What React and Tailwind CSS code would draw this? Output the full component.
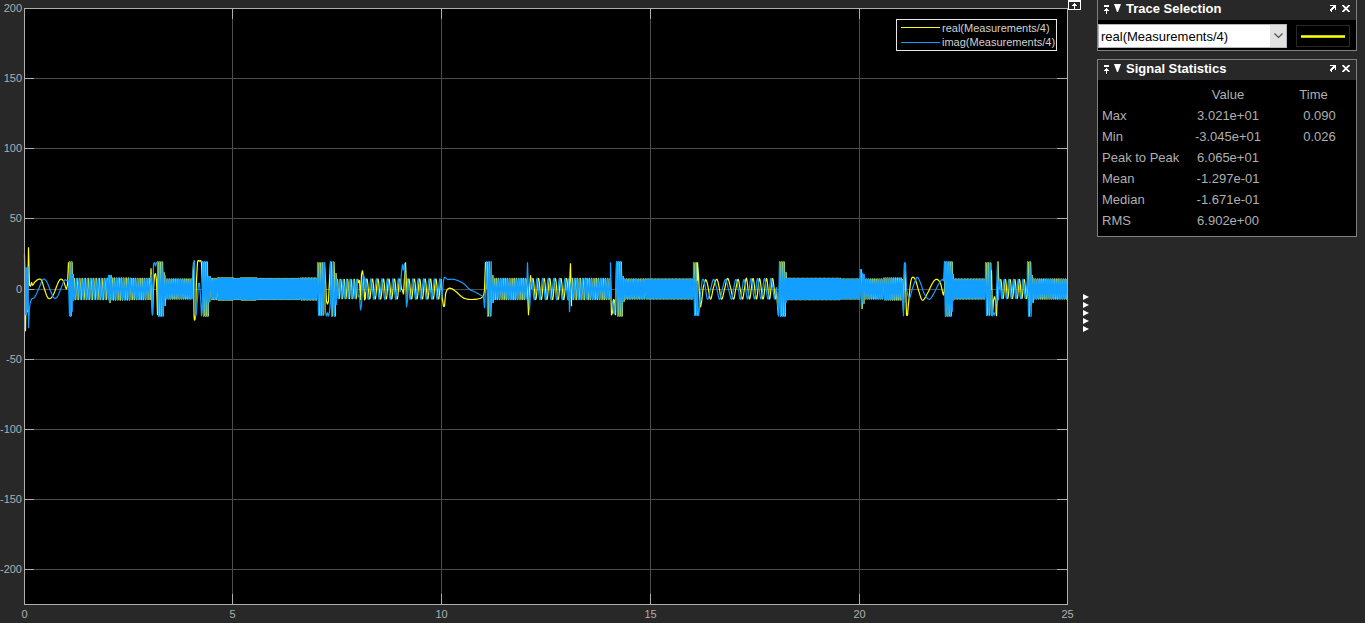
import { useState } from "react";

const BASE = 288.7;

// Each entry is either a steady oscillation {from, to, amp, period}
// or a pair of hand-placed key points {real, imag} for the slow transitions.
const SEGMENTS = [
  {
    real: [[24, 254], [25, 331], [26, 270], [27, 312], [28, 247], [29, 285], [30, 286], [31, 282], [32, 285], [34, 282], [38, 279], [41, 280], [44, 289], [47, 297], [50, 298], [53, 294], [57, 284], [60, 279], [63, 281], [66, 289]],
    imag: [[24, 256], [25, 315], [25.5, 267], [26, 315], [26.5, 267], [27, 310], [27.5, 266], [28, 328], [29, 307], [31, 299], [34, 297], [38, 289], [42, 280], [44, 279], [47, 283], [51, 293], [54, 298], [57, 296], [60, 289], [64, 280], [66, 280]],
  },
  { real: [[67, 284], [68, 262], [69, 266]], imag: [[67, 281], [68, 280], [69, 316]] },
  { from: 69, to: 72, amp: 28, period: 2 },
  { from: 72, to: 73, amp: 15, period: 2 },
  { from: 73, to: 108, amp: 10.8, period: 2.78 },
  { from: 108, to: 111, amp: 14, period: 2 },
  { from: 111, to: 130, amp: 11.2, period: 2.35 },
  { from: 130, to: 150, amp: 10.8, period: 2.25 },
  {
    real: [[150.5, 268], [152, 315], [153, 290], [154, 275], [155, 273], [156, 280], [157, 315]],
    imag: [[151, 274], [152, 315], [153, 264], [154, 262], [155, 266], [156, 262], [157, 264]],
  },
  { from: 157, to: 163, amp: 28, period: 2.2 },
  { from: 163, to: 165, amp: 17, period: 2.1 },
  { from: 165, to: 192, amp: 10.2, period: 1.85 },
  {
    real: [[193, 262], [193.5, 315], [195, 314], [196, 280], [197, 262], [199, 261], [201, 263], [202, 290], [203, 315]],
    imag: [[192.5, 270], [194, 262], [195, 315], [197, 298], [198, 283], [199, 283], [200, 296], [201, 316], [202, 300]],
  },
  { from: 202, to: 208, amp: 28, period: 2.1 },
  { from: 208, to: 210, amp: 13, period: 1.6 },
  { from: 210, to: 217, amp: 10.8, period: 1.6 },
  { from: 217, to: 233, amp: 11.3, period: 1.1 },
  { from: 233, to: 240, amp: 10.7, period: 1.1 },
  { from: 240, to: 256, amp: 11.3, period: 1.1 },
  { from: 256, to: 300, amp: 10.7, period: 1.15 },
  { from: 300, to: 317, amp: 11.2, period: 1.5 },
  { from: 317, to: 324, amp: 27, period: 2.2 },
  {
    real: [[324, 262], [325, 280], [326, 301], [327, 304], [328, 301], [329, 280], [330, 261]],
    imag: [[324, 262], [325, 312], [326, 316], [327, 312], [328, 316], [329, 312], [330, 300]],
  },
  { from: 330, to: 335, amp: 28, period: 2.7 },
  { from: 335, to: 336, amp: 16, period: 2 },
  { from: 336, to: 358, amp: 10.2, period: 3.4 },
  {
    real: [[359, 280], [360, 300], [361, 274], [362, 270], [363, 278], [364, 300], [365, 298]],
    imag: [[359, 295], [360, 310], [361, 305], [362, 285], [363, 274], [364, 278], [365, 292]],
  },
  { from: 365, to: 400, amp: 10.5, period: 5.5 },
  {
    real: [[401, 289], [402, 290], [403, 294], [404, 278], [405, 262], [406, 285], [407, 302]],
    imag: [[401, 272], [402, 264], [403, 270], [404, 263], [405, 285], [406, 307], [407, 300]],
  },
  { from: 407, to: 441, amp: 10.5, period: 5.4 },
  {
    real: [[441, 289], [442, 299], [443, 306], [444, 306], [445, 294], [447, 289], [450, 288], [455, 291], [462, 297], [468, 299], [475, 299], [480, 298], [483, 296]],
    imag: [[441, 300], [442, 290], [443, 280], [444, 277], [447, 279], [453, 279], [459, 281], [464, 284], [469, 289], [475, 292], [483, 296]],
  },
  { real: [[484, 290], [485, 262], [486, 263]], imag: [[484, 308], [485, 290], [486, 262]] },
  { from: 486, to: 491, amp: 28, period: 2.4 },
  { from: 491, to: 493, amp: 14, period: 2 },
  { from: 493, to: 526, amp: 10.7, period: 2.25 },
  {
    real: [[526, 279], [527, 290], [528, 315], [529, 290], [530, 275], [531, 282]],
    imag: [[526, 295], [527, 262], [528, 290], [529, 310], [530, 295], [531, 279]],
  },
  { from: 531, to: 568, amp: 11, period: 5.6 },
  {
    real: [[568, 300], [569, 285], [570, 263], [571, 306]],
    imag: [[568, 278], [569, 312], [570, 290], [571, 280]],
  },
  { from: 571, to: 586, amp: 10.8, period: 2.7 },
  { from: 586, to: 610, amp: 10.7, period: 2.3 },
  {
    real: [[610, 280], [611, 315], [612, 312], [613, 299], [614, 300], [615, 315], [616, 264]],
    imag: [[610, 262], [611, 300], [612, 302], [613, 312], [614, 314], [615, 300], [616, 262]],
  },
  { from: 616, to: 622, amp: 28, period: 2.1 },
  { from: 622, to: 624, amp: 13, period: 2 },
  { from: 624, to: 645, amp: 10.2, period: 1.7 },
  { from: 645, to: 693, amp: 10.2, period: 1.4 },
  { from: 693, to: 697, amp: 27, period: 2.2 },
  {
    real: [[697, 262], [698, 275], [699, 295], [700, 307], [701, 302], [703, 286]],
    imag: [[697, 290], [698, 316], [699, 308], [700, 293], [702, 279], [703, 279]],
  },
  {
    real: [[705, 279], [707, 284], [710, 299], [713, 287], [716, 279], [718, 284], [721, 299], [724, 289], [727, 278], [730, 287], [733, 299], [735, 290], [737.5, 279], [739.5, 288], [742, 299], [744, 288], [746, 278], [749, 299], [752.5, 278], [756, 299], [759, 278], [762.5, 299], [766, 278], [769, 299], [772, 278], [775, 299]],
    imag: [[704, 283], [707, 299], [710, 289], [713, 279], [716, 287], [719, 299], [722, 288], [725, 279], [728, 289], [731, 299], [733, 289], [735.5, 279], [738, 290], [740, 299], [743.5, 279], [747, 299], [750.5, 278], [754, 299], [757, 278], [760.5, 299], [764, 278], [767.5, 299], [770.5, 278], [774, 299]],
  },
  { real: [[776, 290], [777, 305], [778, 316]], imag: [[775, 290], [776, 287], [777, 302], [778, 316]] },
  { from: 779, to: 785, amp: 28, period: 2.1 },
  { from: 785, to: 786, amp: 17, period: 2 },
  { from: 786, to: 840, amp: 11, period: 1.3 },
  { from: 840, to: 860, amp: 10.2, period: 1.3 },
  { from: 860, to: 862, amp: 20, period: 2.2 },
  { from: 862, to: 864, amp: 15, period: 1.8 },
  { from: 864, to: 883, amp: 10.2, period: 1.86 },
  { from: 883, to: 902, amp: 11.2, period: 1.9 },
  {
    real: [[902, 279], [903, 310], [904, 264], [905, 280], [906, 315], [907, 315], [908, 303], [910, 283], [912, 277], [915, 280], [919, 293], [922, 300], [927, 293], [932, 283], [936, 279], [940, 283], [943, 295]],
    imag: [[902, 299], [903, 316], [904, 262], [905, 263], [906, 287], [908, 297], [909, 298], [912, 288], [915, 280], [917, 277], [920, 283], [924, 294], [929, 299], [934, 292], [938, 284], [942, 279], [943, 281]],
  },
  { from: 944, to: 952, amp: 28, period: 1.8 },
  { from: 952, to: 953, amp: 15, period: 2 },
  { from: 953, to: 985, amp: 10.2, period: 1.5 },
  { from: 985, to: 991, amp: 27, period: 2.3 },
  {
    real: [[991, 270], [992, 315], [993, 300], [994, 296], [995, 300], [996, 316], [997, 290], [997.5, 261], [998, 275]],
    imag: [[991, 290], [992, 316], [993, 312], [994, 315], [995, 312], [996, 290], [997, 262], [998, 300]],
  },
  { from: 999, to: 1027, amp: 10, period: 4.7 },
  { from: 1027, to: 1031, amp: 28, period: 2.4 },
  { from: 1031, to: 1033, amp: 14, period: 2 },
  { from: 1033, to: 1067, amp: 10.2, period: 1.86 },
];

function smooth(points) {
  const out = [];
  for (let i = 0; i < points.length - 1; i++) {
    const p0 = points[Math.max(0, i - 1)];
    const p1 = points[i];
    const p2 = points[i + 1];
    const p3 = points[Math.min(points.length - 1, i + 2)];
    const steps = p2[0] - p1[0] > 1.2 ? 6 : 1;
    for (let k = 0; k < steps; k++) {
      const t = k / steps;
      const y =
        0.5 *
        (2 * p1[1] +
          (p2[1] - p0[1]) * t +
          (2 * p0[1] - 5 * p1[1] + 4 * p2[1] - p3[1]) * t * t +
          (3 * p1[1] - p0[1] - 3 * p2[1] + p3[1]) * t * t * t);
      out.push([p1[0] + (p2[0] - p1[0]) * t, y]);
    }
  }
  out.push(points[points.length - 1]);
  return out;
}

function oscillate({ from, to, amp, period }, shift) {
  const out = [];
  const step = period / 10;
  const boost = shift === 0 && period < 3 ? 0.4 : 0;
  for (let x = from; x < to; x += step) {
    const phase = ((x - from) / period) * 2 * Math.PI + shift;
    out.push([x, BASE - (amp + boost) * Math.sin(phase)]);
  }
  return out;
}

function trace(key) {
  const shift = key === "imag" ? Math.PI / 2 : 0;
  const points = SEGMENTS.flatMap((s) => (s[key] ? smooth(s[key]) : oscillate(s, shift)));
  return "M" + points.map(([x, y]) => (x + 0.5).toFixed(2) + " " + (y + 0.3).toFixed(2)).join("L");
}

const REAL_PATH = trace("real");
const IMAG_PATH = trace("imag");

const Y_TICKS = [
  [200, 8], [150, 78], [100, 148], [50, 218], [0, 289], [-50, 359], [-100, 429], [-150, 499], [-200, 569],
];
const X_TICKS = [[0, 24], [5, 232], [10, 441], [15, 650], [20, 859], [25, 1067]];

function Scope() {
  return (
    <svg
      viewBox="0 0 1068 623"
      className="block h-auto w-full overflow-visible font-['Liberation_Sans',Arial,sans-serif] text-[11px]"
      role="img"
      aria-label="Measurements over time"
    >
      <rect x="24" y="8" width="1044" height="597" fill="#000" />
      <g shapeRendering="crispEdges" fill="none">
        {Y_TICKS.slice(1).map(([v, y]) => (
          <g key={v}>
            <path d={`M24 ${y + 0.5}H1067`} stroke="#4d4d4d" />
            <path d={`M24 ${y + 0.5}h10M1067 ${y + 0.5}h-10`} stroke="#afafaf" />
          </g>
        ))}
        {X_TICKS.slice(1, -1).map(([v, x]) => (
          <g key={v}>
            <path d={`M${x + 0.5} 9V604`} stroke="#4d4d4d" />
            <path d={`M${x + 0.5} 9v10M${x + 0.5} 604v-10`} stroke="#afafaf" />
          </g>
        ))}
      </g>
      <path d={REAL_PATH} fill="none" stroke="#ffff11" strokeWidth="1.2" strokeLinejoin="bevel" />
      <path d={IMAG_PATH} fill="none" stroke="#139fff" strokeWidth="1.2" strokeLinejoin="bevel" />
      <rect x="24.5" y="8.5" width="1043" height="596" fill="none" stroke="#afafaf" shapeRendering="crispEdges" />
      <g fill="#afafaf">
        {Y_TICKS.map(([v, y]) => (
          <text key={v} x="22" y={y + 4} textAnchor="end">
            {v}
          </text>
        ))}
        {X_TICKS.map(([v, x]) => (
          <text key={v} x={x + 0.5} y="618" textAnchor="middle">
            {v}
          </text>
        ))}
      </g>
      <g shapeRendering="crispEdges">
        <rect x="896.5" y="19.5" width="160" height="31" fill="#000" stroke="#e6e6e6" />
        <path d="M901 27.5h39" stroke="#ffff11" />
        <path d="M901 42.5h39" stroke="#139fff" />
      </g>
      <g fill="#d0d0d0">
        <text x="942" y="32">real(Measurements/4)</text>
        <text x="942" y="46">imag(Measurements/4)</text>
      </g>
    </svg>
  );
}

function Gutter() {
  return (
    <div className="flex w-[29px] shrink-0 flex-col items-start">
      <button type="button" aria-label="Maximize axes" className="h-[11px]">
        <svg width="13" height="11" viewBox="0 0 13 11" shapeRendering="crispEdges" className="block">
          <path d="M0 0h13v10H0z" fill="#fff" />
          <path d="M1 2h11v7H1z" fill="#282828" />
          <path d="M6 3h1v1h1v1h1v1H7v3H6V6H4V5h1V4h1z" fill="#fff" />
        </svg>
      </button>
      <button type="button" aria-label="Collapse side panels" className="mt-[283px] ml-[15px] flex flex-col gap-0.5">
        {[0, 1, 2, 3, 4].map((n) => (
          <svg key={n} width="6" height="6" viewBox="0 0 6 6" className="block">
            <path d="M0 0L6 3L0 6z" fill="#fff" />
          </svg>
        ))}
      </button>
    </div>
  );
}

function PanelHeader({ title, open, onToggle, onClose }) {
  return (
    <header className="flex h-5 items-center bg-[#282828] px-1.5 pb-0.5 text-white">
      <button type="button" aria-label={`Move ${title} up`}>
        <svg width="5" height="9" viewBox="0 0 5 9" shapeRendering="crispEdges" className="block">
          <path d="M0 0h5v2H0zM2 3h1v1h1v1h1v1H3v3H2V6H0V5h1V4h1z" fill="#fff" />
        </svg>
      </button>
      <button type="button" aria-label={`Toggle ${title}`} aria-expanded={open} onClick={onToggle} className="ml-[5px] pb-0.5">
        <svg width="7" height="8" viewBox="0 0 7 8" className="block">
          <path d="M0 0H7L4 8H3z" fill="#fff" />
        </svg>
      </button>
      <h2 className="ml-[5px] flex-1 text-[13px] leading-[18px] font-bold whitespace-nowrap">{title}</h2>
      <button type="button" aria-label={`Undock ${title}`} className="pb-0.5">
        <svg width="6" height="7" viewBox="0 0 6 7" shapeRendering="crispEdges" className="block">
          <path d="M0 0h6v5H5V3H4v1H3v1H2v2H1V6H0V4h1V3h1V2h1V1H0z" fill="#fff" />
        </svg>
      </button>
      <button type="button" aria-label={`Close ${title}`} onClick={onClose} className="ml-1.5 pb-0.5">
        <svg width="8" height="7" viewBox="0 0 8 7" className="block">
          <path d="M0.500 0L7.500 7M7.500 0L0.500 7" stroke="#fff" strokeWidth="1.800" />
        </svg>
      </button>
    </header>
  );
}

function Panel({ title, className, children }) {
  const [open, setOpen] = useState(true);
  const [closed, setClosed] = useState(false);
  if (closed) return null;
  return (
    <section className={`border border-[#808080] bg-black ${className}`}>
      <PanelHeader title={title} open={open} onToggle={() => setOpen(!open)} onClose={() => setClosed(true)} />
      {open && children}
    </section>
  );
}

const STATS = [
  ["Max", "3.021e+01", "0.090"],
  ["Min", "-3.045e+01", "0.026"],
  ["Peak to Peak", "6.065e+01", ""],
  ["Mean", "-1.297e-01", ""],
  ["Median", "-1.671e-01", ""],
  ["RMS", "6.902e+00", ""],
];

export default function App() {
  return (
    <div className="flex min-h-screen items-start bg-[#282828] font-['Liberation_Sans',Arial,sans-serif]">
      <main className="min-w-0 flex-1">
        <Scope />
      </main>
      <Gutter />
      <aside className="mr-2 flex w-[260px] shrink-0 flex-col gap-2">
        <Panel title="Trace Selection" className="border-t-0">
          <div className="flex items-center gap-[9px] pt-1 pr-1.5 pb-0.5">
            <div className="grid flex-1 grid-cols-[1fr_16px] border border-[#b5b5bd] bg-white">
              <select
                aria-label="Trace"
                className="col-span-2 col-start-1 row-start-1 h-[22px] w-full appearance-none bg-transparent pt-px pl-0.5 text-[13px] text-black outline-none"
              >
                <option>real(Measurements/4)</option>
                <option>imag(Measurements/4)</option>
              </select>
              <span className="pointer-events-none col-start-2 row-start-1 flex items-center justify-center bg-[#e1e1e1]">
                <svg width="9" height="6" viewBox="0 0 9 6">
                  <path d="M0.500 0.500L4.500 4.500L8.500 0.500" fill="none" stroke="#505050" strokeWidth="1.200" />
                </svg>
              </span>
            </div>
            <div className="flex h-[22px] w-[54px] items-center border border-[#282828] px-1">
              <div className="h-[3px] w-full border-y border-[#c8c800] bg-[#ffff11]" />
            </div>
          </div>
        </Panel>
        <Panel title="Signal Statistics" className="">
          <table className="mt-1 mb-[5px] w-full table-fixed text-[13px] leading-[21px] text-[#afafaf]">
            <colgroup>
              <col className="w-[86px]" />
              <col className="w-[88px]" />
              <col />
            </colgroup>
            <thead>
              <tr>
                <td />
                <th scope="col" className="font-normal">Value</th>
                <th scope="col" className="pr-px font-normal">Time</th>
              </tr>
            </thead>
            <tbody>
              {STATS.map(([name, value, time]) => (
                <tr key={name}>
                  <th scope="row" className="pl-1 text-left font-normal whitespace-nowrap">{name}</th>
                  <td className="text-center">{value}</td>
                  <td className="pl-[11px] text-center">{time}</td>
                </tr>
              ))}
            </tbody>
          </table>
        </Panel>
      </aside>
    </div>
  );
}
